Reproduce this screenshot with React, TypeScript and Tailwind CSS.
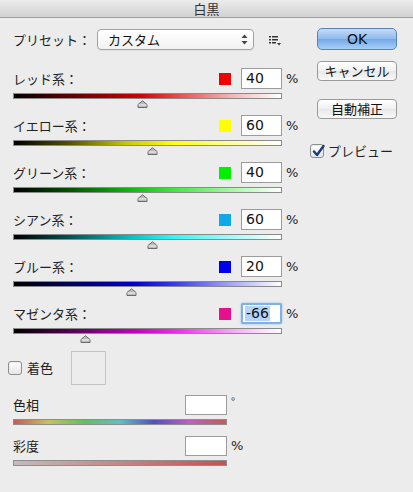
import React from 'react';

const FONT = { fontFamily: '"Noto Sans CJK JP", "Noto Sans", sans-serif' };

type Row = { label: string; swatch: string; value: number; bar: string; focused?: boolean };

const rows: Row[] = [
  { label: 'レッド系：', swatch: 'bg-[#f00000]', value: 40, bar: 'bg-[linear-gradient(to_right,#000_0%,#5a0000_20%,#d00000_47%,#e85050_62%,#f4b8b8_82%,#fff_100%)]' },
  { label: 'イエロー系：', swatch: 'bg-[#ffff00]', value: 60, bar: 'bg-[linear-gradient(to_right,#000_0%,#505000_20%,#c8c800_42%,#ffff10_60%,#ffff90_80%,#fff_100%)]' },
  { label: 'グリーン系：', swatch: 'bg-[#00f000]', value: 40, bar: 'bg-[linear-gradient(to_right,#000_0%,#005000_20%,#10c010_45%,#40e840_60%,#a8f8a8_82%,#fff_100%)]' },
  { label: 'シアン系：', swatch: 'bg-[#10a8e8]', value: 60, bar: 'bg-[linear-gradient(to_right,#000_0%,#005050_20%,#00c8c8_45%,#30f8f8_60%,#a0fcfc_82%,#fff_100%)]' },
  { label: 'ブルー系：', swatch: 'bg-[#0000f0]', value: 20, bar: 'bg-[linear-gradient(to_right,#000_0%,#000060_22%,#0000d0_45%,#3838f0_60%,#a8a8f8_82%,#fff_100%)]' },
  { label: 'マゼンタ系：', swatch: 'bg-[#e8108c]', value: -66, focused: true, bar: 'bg-[linear-gradient(to_right,#000_0%,#500050_20%,#c000c0_45%,#f030f0_62%,#f8a8f8_82%,#fff_100%)]' },
];

function Thumb({ value }: { value: number }) {
  const left = ((value + 200) / 500) * 269 - 5.5;
  return (
    <div className="relative h-[9px]">
      <svg width="11" height="8" viewBox="0 0 11 8" className="absolute top-[1px]" style={{ left }}>
        <path d="M1 7.5 V4.5 L5.5 0.8 L10 4.5 V7.5 Z" fill="#bdbdbd" stroke="#6a6a6a" strokeWidth="1" />
        <path d="M1.5 5 H9.5" stroke="#f4f4f4" strokeWidth="1" />
      </svg>
    </div>
  );
}

function SliderRow({ row }: { row: Row }) {
  return (
    <div className="h-[47px]">
      <div className="flex items-center h-[21px]">
        <div className="flex items-center w-[269px]">
          <span className="flex-1 text-[13px] text-[#222]">{row.label}</span>
          <span className={`w-[12px] h-[12px] ${row.swatch}`} />
          {row.focused ? (
            <div className="ml-[10px] w-[41px] h-[21px] rounded-[2px] border-2 border-[#7fb0e6] bg-white flex items-center pl-[2px] shadow-[0_0_2px_#7fb0e6]">
              <span className="bg-[#b4d4fc] text-[14px] leading-[15px] text-[#111] px-[1px]" style={{ fontFamily: '"DejaVu Sans", sans-serif' }}>-66</span>
            </div>
          ) : (
            <div
              className="ml-[10px] w-[41px] h-[21px] border border-[#9c9c9c] bg-white flex items-center pl-[4px] text-[14px] text-[#111]"
              style={{ fontFamily: '"DejaVu Sans", sans-serif' }}
            >
              {row.value}
            </div>
          )}
        </div>
        <span className="ml-[4px] text-[13px] text-[#222]" style={{ fontFamily: '"DejaVu Sans", sans-serif' }}>%</span>
      </div>
      <div className={`mt-[4px] w-[269px] h-[6px] border border-[#8a8a8a] ${row.bar}`} />
      <Thumb value={row.value} />
    </div>
  );
}

function Checkbox({ checked }: { checked?: boolean }) {
  return (
    <div className="w-[14px] h-[14px] rounded-[3px] border border-[#8e8e8e] bg-[linear-gradient(#ffffff,#e6e6e6)] relative shadow-[inset_0_1px_1px_rgba(0,0,0,0.08)]">
      {checked && (
        <svg width="14" height="14" viewBox="0 0 14 14" className="absolute -top-[1px] left-[0px]">
          <path d="M3 7.5 L6 11 L12.5 2" fill="none" stroke="#1b3a78" strokeWidth="2.4" strokeLinecap="round" strokeLinejoin="round" />
        </svg>
      )}
    </div>
  );
}

function Button({ children, primary }: { children: React.ReactNode; primary?: boolean }) {
  return primary ? (
    <div className="w-[80px] h-[22px] rounded-[5px] border border-[#5a82b8] bg-[linear-gradient(#c4dcf6,#8ebbee_50%,#74a8e8_51%,#a8d0f8)] flex items-center justify-center text-[14px] text-[#111]">
      {children}
    </div>
  ) : (
    <div className="w-[80px] h-[20px] rounded-[4px] border border-[#9a9a9a] bg-[linear-gradient(#ffffff,#f0f0f0_50%,#e8e8e8_51%,#f8f8f8)] flex items-center justify-center text-[13px] text-[#111]">
      {children}
    </div>
  );
}

export default function App() {
  return (
    <div className="w-[413px] h-[492px] bg-[#ececec] overflow-hidden" style={FONT}>
      <div className="h-[18px] bg-[linear-gradient(#ebebeb,#d2d2d2)] border-b border-[#9e9e9e] flex items-center justify-center text-[13px] text-[#333]">
        白黒
      </div>
      <div className="flex">
        <div className="pl-[13px] pt-[11px] w-[304px]">
          <div className="flex items-center h-[21px]">
            <span className="w-[84px] text-[13px] text-[#222]">プリセット：</span>
            <div className="w-[157px] h-[21px] rounded-[4px] border border-[#a2a2a2] bg-[linear-gradient(#ffffff,#f2f2f2)] flex items-center pl-[10px] pr-[5px] text-[13px] text-[#111] shadow-[0_1px_0_rgba(0,0,0,0.05)]">
              <span className="flex-1">カスタム</span>
              <svg width="7" height="11" viewBox="0 0 7 11">
                <path d="M3.5 0.5 L6.5 4 H0.5 Z" fill="#444" />
                <path d="M3.5 10.5 L6.5 7 H0.5 Z" fill="#444" />
              </svg>
            </div>
            <svg width="12" height="11" viewBox="0 0 12 11" className="ml-[15px] mt-[1px]">
              <rect x="0" y="1" width="2" height="1.5" fill="#333" />
              <rect x="3" y="1" width="6" height="1.5" fill="#333" />
              <rect x="0" y="4" width="2" height="1.5" fill="#333" />
              <rect x="3" y="4" width="6" height="1.5" fill="#333" />
              <rect x="0" y="7" width="2" height="1.5" fill="#333" />
              <rect x="3" y="7" width="4" height="1.5" fill="#333" />
              <path d="M8 8 H12 L10 10.5 Z" fill="#333" />
            </svg>
          </div>
          <div className="mt-[18px]">
            {rows.map((r) => (
              <SliderRow key={r.label} row={r} />
            ))}
          </div>
          <div className="flex items-center h-[34px] mt-[1px]">
            <div className="-ml-[5px]">
              <Checkbox />
            </div>
            <span className="ml-[5px] text-[13px] text-[#222]">着色</span>
            <div className="ml-[18px] w-[35px] h-[34px] border border-[#c4c4c4] bg-[#ececec]" />
          </div>
          <div className="mt-[10px]">
            <div className="flex items-center h-[20px]">
              <span className="w-[172px] text-[13px] text-[#222]">色相</span>
              <div className="w-[42px] h-[20px] border border-[#9c9c9c] bg-white" />
              <span className="ml-[4px] -mt-[8px] text-[11px] text-[#222]">°</span>
            </div>
            <div className="mt-[4px] w-[214px] h-[6px] border border-[#8e8e8e] bg-[linear-gradient(to_right,#c45a5a_0%,#c8c060_16%,#60c060_33%,#60c0c0_50%,#5050c0_66%,#c060c0_83%,#c45a5a_100%)]" />
          </div>
          <div className="mt-[11px]">
            <div className="flex items-center h-[20px]">
              <span className="w-[172px] text-[13px] text-[#222]">彩度</span>
              <div className="w-[42px] h-[20px] border border-[#9c9c9c] bg-white" />
              <span className="ml-[4px] text-[13px] text-[#222]" style={{ fontFamily: '"DejaVu Sans", sans-serif' }}>%</span>
            </div>
            <div className="mt-[4px] w-[214px] h-[6px] border border-[#8e8e8e] bg-[linear-gradient(to_right,#c2bcbc,#c85050)]" />
          </div>
        </div>
        <div className="pl-[13px] pt-[10px] flex flex-col">
          <Button primary>
            <span style={{ fontFamily: '"DejaVu Sans", sans-serif' }}>OK</span>
          </Button>
          <div className="mt-[11px]">
            <Button>キャンセル</Button>
          </div>
          <div className="mt-[18px]">
            <Button>自動補正</Button>
          </div>
          <div className="mt-[22px] -ml-[7px] flex items-center">
            <Checkbox checked />
            <span className="ml-[4px] text-[13px] text-[#222]">プレビュー</span>
          </div>
        </div>
      </div>
    </div>
  );
}
